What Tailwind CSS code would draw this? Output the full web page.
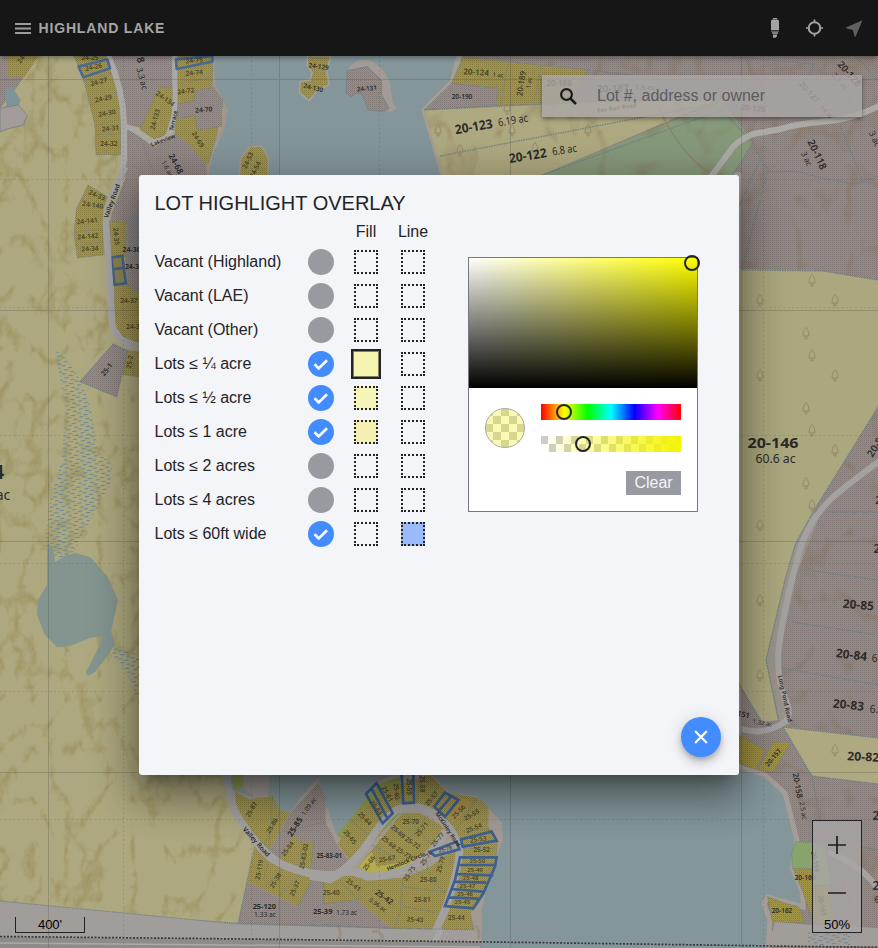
<!DOCTYPE html>
<html lang="en">
<head>
<meta charset="utf-8">
<title>Highland Lake</title>
<script src="https://cdn.jsdelivr.net/npm/@tailwindcss/browser@4"></script>
</head>
<body class="font-['Liberation_Sans',sans-serif]">
<div class="relative flex flex-col w-[878px] h-[948px] overflow-hidden text-[#222428]">

<!-- Map canvas -->
<svg class="absolute inset-0" width="878" height="948" viewBox="0 0 878 948" font-family="Noto Sans, sans-serif" font-weight="600" fill="#2c2b29" text-anchor="middle">
<defs>
<pattern id="m" width="2" height="2" patternUnits="userSpaceOnUse"><rect width="2" height="2" fill="#988d88"/><rect width="1" height="1" fill="#7f7572"/><rect x="1" y="1" width="1" height="1" fill="#8c817c"/></pattern>
<pattern id="m3" width="6" height="6" patternUnits="userSpaceOnUse"><rect width="6" height="6" fill="#9b908b"/><rect width="3" height="3" fill="#807673"/><rect x="3" y="3" width="3" height="3" fill="#8c817e"/></pattern>
<pattern id="g3" width="6" height="6" patternUnits="userSpaceOnUse"><rect width="6" height="6" fill="#a7994a"/><rect width="3" height="3" fill="#867b3c"/><rect x="3" y="3" width="3" height="3" fill="#978b42"/></pattern>
<pattern id="marsh" width="12" height="8" patternUnits="userSpaceOnUse" patternTransform="rotate(-4)"><path d="M0 1.5h4M6 3.5h4.500M2 5.500h4M8 7.500h4" stroke="#66889a" stroke-width="1"/></pattern>
<filter id="relief" x="0" y="0" width="100%" height="100%" color-interpolation-filters="sRGB"><feTurbulence type="turbulence" baseFrequency=".03 .02" numOctaves="4" seed="8"/><feColorMatrix values="0 0 0 0 .54  0 0 0 0 .46  0 0 0 0 .22  -4 0 0 0 1"/></filter>
<filter id="reliefR" x="0" y="0" width="100%" height="100%" color-interpolation-filters="sRGB"><feTurbulence type="turbulence" baseFrequency=".02 .015" numOctaves="3" seed="3"/><feColorMatrix values="0 0 0 0 .5  0 0 0 0 .4  0 0 0 0 .28  -4 0 0 0 .8"/></filter>
<clipPath id="cl"><path d="M0 130L22 124 28 114 20 90 38 56H76L95 125 97 154H121L108 198 88 185 74 230 77 258H105L113 344 80 381 116 396 139 380V775H224L234 812 255 848 237 923 0 901Z"/></clipPath>
<clipPath id="cr"><path d="M461 56L452 82 424 110 443 175H739V269L823 271 878 280V56ZM878 407L813 512 780 660 786 725 878 738ZM739 735L812 776 878 784V928L805 920 797 840 785 793 765 775 739 765Z"/></clipPath>
<g id="tree"><path d="M0 -5.500C-2.500 -3 -3 0 -3 3H3C3 0 2.500 -3 0 -5.500M-1 3V6H1V3" fill="none" stroke="#948c69" stroke-width="1"/></g>
</defs>
<rect width="878" height="948" fill="#84969a"/>

<!-- Western shore -->
<path d="M0 56H214L215 85 227 108 223 132 214 150 207 175V400H139V775H224L234 812 255 848 237 925 0 901Z" fill="#ada87f"/>
<path d="M212 56L214 86 226 110 222 130 213 145 206 176" fill="none" stroke="#a1968c" stroke-width="4"/>
<g clip-path="url(#cl)"><rect y="56" width="270" height="880" filter="url(#relief)" opacity=".42"/></g>
<path d="M56 350L68 360 80 380 90 405 95 435 100 455 113 463 110 485 90 520 75 550 60 562 45 545 50 500 62 460 65 410Z" fill="url(#marsh)"/>
<path d="M115 644L125 649 139 656V704L127 672 112 656Z" fill="url(#marsh)"/>
<path d="M47 543L53 547 55 562 65 556 75 553 90 557 108 577 118 600 111 632 115 644 108 655 95 672 88 676 86 672 100 645 101 636 90 638 70 646 57 647 45 635 37 615 38 600 47 585Z" fill="#84948f"/>

<!-- North-west lots -->
<g transform="scale(.33333)" stroke-width="3" stroke-linejoin="round">
<path d="M0 168H115L45 270 0 325Z" fill="url(#m3)"/><path d="M22 168H115L75 230H22Z" fill="url(#g3)"/>
<path d="M15 270L36 260 62 300 54 325 20 330Z" fill="#7f9496"/><path d="M0 325L54 315 82 345 70 375 30 385 0 395Z" fill="#a39c9b" stroke="#7e8484"/>
<path d="M222 168H320L362 300V464H288L285 375 250 235Z" fill="url(#g3)" stroke="#77827b" stroke-dasharray="4 3"/>
<path d="M250 245L350 215M272 315L358 275M282 378L362 358M290 404L362 402" stroke="#77827b" stroke-dasharray="4 3"/>
<path d="M330 168H519V262L478 262 424 384 378 372 355 260Z" fill="url(#m3)"/>
<path d="M478 262H520L515 340 495 405 465 418 420 388Z" fill="url(#g3)" stroke="#77827b" stroke-dasharray="4 3"/>
<path d="M528 168H638L636 262 665 300 655 385 625 492 605 482 565 430 525 405Z" fill="url(#g3)" stroke="#77827b" stroke-dasharray="4 3"/>
<path d="M533 312L580 303 588 272 640 262 668 300 664 380 593 390 585 345 533 357Z" fill="url(#m3)" stroke="#77827b" stroke-dasharray="4 3"/>
<path d="M380 385L465 440 525 405 565 430 605 482 620 492V530H365L382 480Z" fill="url(#m3)"/>
<path d="M425 420L465 530M530 252L632 232" fill="none" stroke="#77827b" stroke-dasharray="4 3"/>
<path d="M375 380Q400 382 450 424Q500 430 515 385Q530 320 524 240V168" fill="none" stroke="#aaa9a7" stroke-width="15"/>
<path d="M325 168Q370 270 372 375V460Q370 520 355 560" fill="none" stroke="#aaa9a7" stroke-width="18"/>
<path d="M236 200L322 178 330 205 250 232ZM528 178L637 168V185L530 207Z" fill="none" stroke="#4a6a94" stroke-width="8"/>
<path d="M718 530L722 475 750 440 785 438 806 475 803 530Z" fill="url(#g3)" stroke="#a1988a" stroke-width="5"/>
<g font-size="20" fill="#4a4629">
<text transform="translate(282 208) rotate(-12)">24-26</text><text transform="translate(298 252) rotate(-14)">24-27</text><text transform="translate(311 302) rotate(-12)">24-29</text><text transform="translate(322 346) rotate(-10)">24-30</text><text transform="translate(332 392) rotate(-6)">24-31</text><text x="327" y="437">24-32</text><text x="270" y="180">24-25</text>
<text transform="translate(583 188) rotate(-5)">24-75</text><text transform="translate(583 225) rotate(-5)">24-74</text><text transform="translate(558 280) rotate(-8)">24-72</text><text transform="translate(612 336) rotate(-5)" fill="#2c2b29">24-70</text><text transform="translate(588 422) rotate(58)">24-69</text><text transform="translate(472 360) rotate(-75)">24-133</text><text transform="translate(492 302) rotate(35)">24-134</text>
<text transform="translate(750 484) rotate(-65)">24-53</text><text transform="translate(772 512) rotate(-65)">24-54</text><text transform="translate(70 180) rotate(-55)">24-</text></g>
<text transform="translate(412 182) rotate(75)" font-size="30">8</text><text transform="translate(418 238) rotate(75)" font-size="25" font-weight="400">3.3 ac</text>
<text transform="translate(520 495) rotate(62)" font-size="25">24-68</text><text transform="translate(496 509) rotate(62)" font-size="19" font-weight="400">1.6 ac</text>
<text transform="translate(491 426) rotate(-22)" font-size="17">Lakeview</text><text transform="translate(526 363) rotate(-78)" font-size="17">Terrace</text>
</g>

<!-- Valley Road bend -->
<g transform="translate(0 170) scale(.33333)" stroke-width="3">
<path d="M435 0H385L335 130 330 155 380 155 375 260 382 345 435 395Z" fill="url(#m3)"/>
<path d="M375 140L420 120V300L390 250Z" fill="url(#marsh)" opacity=".9"/>
<path d="M264 45L325 82 310 150 316 254 232 264 222 190 230 115Z" fill="url(#g3)" stroke="#77827b" stroke-dasharray="4 3"/>
<path d="M243 87L317 116M222 187L310 176M226 226L314 214" stroke="#77827b" stroke-dasharray="4 3"/>
<path d="M328 155H380L375 260 335 262ZM343 345L380 342 435 390V525L370 500 345 465Z" fill="url(#g3)" stroke="#77827b" stroke-dasharray="4 3"/>
<path d="M343 430L435 440" stroke="#77827b" stroke-dasharray="4 3"/>
<path d="M334 262L367 258 378 340 344 344ZM338 298L374 293" fill="#8c8551" stroke="#48658c" stroke-width="8"/>
<path d="M340 522L383 542 350 680 240 635Z" fill="url(#m3)" stroke="#6e8088" stroke-width="4" stroke-dasharray="4 3"/>
<path d="M383 542L435 548V622L368 614ZM405 545L400 618" fill="url(#g3)" stroke="#77827b" stroke-dasharray="4 3"/>
<path d="M375 -10L330 90Q317 120 318 165L335 440Q335 520 420 528" fill="none" stroke="#a6a5a3" stroke-width="20"/>
<g font-size="20" fill="#4a4629"><text transform="translate(288 82) rotate(22)">24-33</text><text transform="translate(277 112) rotate(8)">24-140</text><text transform="translate(262 160) rotate(-5)">24-141</text><text transform="translate(264 206) rotate(-5)">24-142</text><text transform="translate(270 243) rotate(-3)">24-34</text><text transform="translate(342 200) rotate(85)">24-35</text><text x="387" y="398">24-37</text><text x="405" y="478">24-39</text><text transform="translate(396 577) rotate(-80)">25-2</text></g>
<text x="398" y="245" font-size="21">24-36-</text><text x="402" y="297" font-size="21">24-36</text><text transform="translate(326 603) rotate(-52)" font-size="21">25-1</text>
<text transform="translate(342 95) rotate(-70)" font-size="19">Valley Road</text>
<text x="-5" y="927" font-size="60" font-weight="700">4</text><text x="9" y="990" font-size="42" font-weight="400">ac</text>
</g>

<!-- Islands -->
<g transform="translate(230 40) scale(.33333)" stroke-width="3">
<path d="M232 48H302L290 95 298 135 265 148 237 182 208 158 210 125 240 120 246 98 232 75Z" fill="url(#g3)" stroke="#a5a09c" stroke-width="5"/>
<path d="M352 92Q370 55 415 60Q465 80 480 130L488 185 500 205 485 215 450 210Z" fill="#a39b96"/>
<path d="M352 92L412 80 455 122V165L477 205 462 214 415 210 395 160 375 160 365 170 348 160Z" fill="url(#m3)" stroke="#77828a"/>
<text transform="translate(265 86) rotate(8)" font-size="19">24-129</text><text transform="translate(248 150) rotate(14)" font-size="19">24-130</text><text transform="translate(411 152) rotate(-5)" font-size="19">24-131</text>
</g>

<!-- Eastern shore -->
<path d="M461 50L452 82 424 110 443 175H739V766L765 775 785 793 797 840 792 868 803 893 803 907 768 897 764 904 770 920 768 952H890V50Z" fill="url(#m)" stroke="#a59d97" stroke-width="5"/>
<path d="M424 110L565 103 717 100 542 175H443Z" fill="#aea980"/>
<path d="M542 175L722 100 753 143 732 176Z" fill="#87997b"/>
<path d="M739 269L823 271 878 280V407L813 512 795 545 785 580 766 660 778 720 762 722 739 684Z" fill="#aba77e"/>
<path d="M783 727L878 738V784L812 776Z" fill="#aea980"/>
<path d="M813 512L797 540 785 580 766 660 780 723 790 725 788 700 778 665 796 575 820 515Z" fill="#9a938b"/>
<g clip-path="url(#cr)"><rect x="420" y="56" width="458" height="880" filter="url(#reliefR)" opacity=".35"/></g>
<g fill="none" stroke="#6e8088" stroke-width="1.300" stroke-dasharray="1.500 1"><path d="M440 156L717 103M424 110L565 103M542 175L722 110M722 110L753 143 732 176M742 270L823 271 878 280M878 407L813 512 795 545 785 580 766 660 778 718M739 684L762 722M587 70L820 97M830 512H878M800 569L878 580M792 622L878 635M783 668L878 685M783 727L878 738M812 776L878 784M783 727L812 776 832 885 838 925M854 846L878 850M752 143L768 170 760 200 742 269M768 172L795 171 830 180 855 184 878 176M840 125L863 182M725 56L814 64 805 85 790 110M814 64L853 105M855 56L878 80M739 206L760 160"/><path d="M658 106Q680 155 712 174" stroke="#8d765b"/></g>
<g transform="translate(230 40) scale(.33333)" stroke-width="3" stroke="#77827b" stroke-dasharray="4 3">
<path d="M700 50L835 65 1071 90 1020 190 798 196 805 145 665 130Z" fill="url(#g3)"/><path d="M665 130L805 145 798 196 585 208Z" fill="url(#m3)"/><path d="M835 65L812 195M935 75L912 190" fill="none"/></g>
<g><use href="#tree" x="438" y="130"/><use href="#tree" x="460" y="150"/><use href="#tree" x="512" y="130"/><use href="#tree" x="507" y="108"/><use href="#tree" x="535" y="148"/><use href="#tree" x="588" y="130"/>
<use href="#tree" x="812" y="280"/><use href="#tree" x="760" y="300"/><use href="#tree" x="835" y="300"/><use href="#tree" x="806" y="333"/><use href="#tree" x="812" y="355"/><use href="#tree" x="760" y="375"/><use href="#tree" x="835" y="375"/><use href="#tree" x="806" y="408"/><use href="#tree" x="812" y="430"/><use href="#tree" x="835" y="450"/><use href="#tree" x="806" y="483"/><use href="#tree" x="812" y="505"/><use href="#tree" x="760" y="525"/><use href="#tree" x="760" y="600"/><use href="#tree" x="760" y="675"/><use href="#tree" x="835" y="750"/></g>
<path d="M884 103Q860 117 830 121Q795 124 781 129L753 134Q735 141 728 154L710 178" fill="none" stroke="#abaaa6" stroke-width="6"/>
<path d="M884 458Q845 486 830 500Q805 525 797 560Q781 620 778 655Q778 685 786 700Q792 715 785 722Q762 737 739 728M828 852Q862 865 878 889" fill="none" stroke="#a3a2a0" stroke-width="6"/>
<g transform="translate(735 560) scale(.33333)" stroke="#77827b" stroke-width="3" stroke-dasharray="4 3">
<path d="M12 525L90 570 65 628 35 620 12 610ZM115 545L168 548 115 635 68 630ZM175 926H275L300 1090 235 1090 205 1000ZM98 1010L150 1030 190 1040 210 1088 112 1086Z" fill="url(#g3)"/>
<path d="M182 845L270 850 290 975 232 978 235 926H172L170 880Z" fill="#88a36c"/></g>
<g>
<text transform="translate(474.500 131) rotate(-10)" font-size="12.700" font-weight="700" textLength="38" lengthAdjust="spacingAndGlyphs">20-123</text><text transform="translate(513.500 124) rotate(-10)" font-size="11" font-weight="400" textLength="30" lengthAdjust="spacingAndGlyphs">6.19 ac</text>
<text transform="translate(528.500 160) rotate(-9)" font-size="12.700" font-weight="700" textLength="38" lengthAdjust="spacingAndGlyphs">20-122</text><text transform="translate(565 153.500) rotate(-9)" font-size="11" font-weight="400" textLength="25" lengthAdjust="spacingAndGlyphs">6.8 ac</text>
<text transform="translate(476 75) rotate(3)" font-size="8" fill="#454127">20-124</text><text transform="translate(498 77) rotate(3)" font-size="6" font-weight="400">1 ac</text>
<text x="462" y="99" font-size="6.500">20-190</text><text transform="translate(524 84) rotate(-82)" font-size="8" fill="#454127">20-189</text><text transform="translate(531 83) rotate(-82)" font-size="6" font-weight="400">1 ac</text>
<text x="559" y="86" font-size="8">20-188</text><text transform="translate(613 92) rotate(-2)" font-size="10">20-187</text><text x="645" y="90" font-size="7.500" font-weight="400">1.8 ac</text><text transform="translate(617 110) rotate(-8)" font-size="6">Fox Run Road</text>
<text transform="translate(753 111) rotate(5)" font-size="8">20-126</text>
<text transform="translate(807 94) rotate(48)" font-size="8">20-127</text><text transform="translate(825 113) rotate(48)" font-size="5.500">1.6 ac</text>
<text transform="translate(847 76) rotate(48)" font-size="9.500">20-128</text><text transform="translate(838 83) rotate(48)" font-size="7.500" font-weight="400">2.1 ac</text>
<text transform="translate(814 156) rotate(65)" font-size="10">20-118</text><text transform="translate(804 160) rotate(65)" font-size="8" font-weight="400">3 ac</text><text transform="translate(872 140) rotate(65)" font-size="8.500" font-weight="400">3 ac</text>
<text x="773" y="448" font-size="14.500" font-weight="700" textLength="51" lengthAdjust="spacingAndGlyphs">20-146</text><text x="775.500" y="463" font-size="12.200" font-weight="400">60.6 ac</text>
<text transform="translate(878 449) rotate(-58)" font-size="10">20-8</text><text x="878" y="504" font-size="10">2</text><text x="877" y="553" font-size="12">2</text>
<text transform="translate(858 609) rotate(5)" font-size="12" font-weight="700" textLength="31" lengthAdjust="spacingAndGlyphs">20-85</text><text transform="translate(851 659) rotate(7)" font-size="12" font-weight="700" textLength="31" lengthAdjust="spacingAndGlyphs">20-84</text><text x="876" y="662" font-size="10" font-weight="400">6.</text><text transform="translate(848 709) rotate(6)" font-size="12" font-weight="700" textLength="31" lengthAdjust="spacingAndGlyphs">20-83</text><text x="874" y="713" font-size="10" font-weight="400">6.</text><text transform="translate(863 761) rotate(3)" font-size="12" font-weight="700" textLength="32" lengthAdjust="spacingAndGlyphs">20-82</text>
<text transform="translate(795 786) rotate(80)" font-size="8">20-158</text><text transform="translate(801 811) rotate(80)" font-size="6.500" font-weight="400">2.5 ac</text><text transform="translate(775 759) rotate(-50)" font-size="6.500">20-157</text><text x="782" y="913" font-size="6.500">20-162</text><text x="805" y="880" font-size="6.500">20-160</text>
<text transform="translate(813 862) rotate(80)" font-size="6.500">20-159</text><text transform="translate(820 906) rotate(80)" font-size="6.500">20-161</text>
<text transform="translate(743 717) rotate(12)" font-size="7.500">151</text><text transform="translate(762 725) rotate(10)" font-size="6" font-weight="400">1.32 ac</text><text transform="translate(783 699) rotate(78)" font-size="6">Long Pond Road</text>
<text x="876" y="820" font-size="12">2</text><text x="876" y="890" font-size="12">2</text><text x="877" y="903" font-size="9" font-weight="400">6</text></g>

<!-- Southern peninsula -->
<g transform="translate(200 770) scale(.33333)" stroke-width="3">
<path d="M75 15L100 60 160 85 205 80 240 128 270 128 300 85 355 22 375 95 410 195 450 145 500 85 530 35 590 10H690L750 70 830 78 905 155 908 210 870 310 845 420V520L460 520 400 465 115 460 163 230 85 60Z" fill="#a39b93"/>
<path d="M130 15H210L205 80 160 80 130 55Z" fill="#a09894"/>
<path d="M95 15H130L128 50 105 62ZM410 195L500 85 540 40 600 22V130L480 260Z" fill="#8e984f"/>
<path d="M105 65L150 88 218 78 240 120 270 128 205 250 165 220 112 145Z" fill="url(#g3)"/>
<path d="M355 40L378 80 376 155 412 225 450 275 400 310 330 305 240 270 205 250 270 130Z" fill="url(#m3)"/>
<path d="M280 195L305 215 342 213 335 300 240 270Z" fill="url(#g3)"/>
<path d="M165 230L205 275 300 315 340 325 293 410 140 335Z" fill="url(#g3)"/>
<path d="M140 335L293 410 340 325 410 335 470 390 580 478 115 460Z" fill="url(#m3)"/>
<path d="M370 335L440 310 480 325 610 325 690 290 760 240 780 255 720 480 580 478 470 390 372 402Z" fill="url(#g3)"/>
<path d="M413 222L455 150 540 80 575 50 690 15 745 70 830 82 865 110V170L895 215 885 290 850 370 820 420 810 430 823 482H718L780 240 740 170 690 110 600 105 450 272Z" fill="url(#g3)"/>
<path d="M605 130H660L720 165 740 190 650 275 560 300 500 305 475 290Z" fill="url(#g3)"/>
<path d="M475 290L515 245 530 290 640 270 700 235 745 175 725 220 600 305 510 312Z" fill="#b2ac4e"/>
<path d="M740 140L790 88 815 95 760 160Z" fill="#a88e49"/>
<path d="M180 255L240 125M205 275L190 330M255 290L195 350M300 315L235 380M218 80L205 250M378 155L230 190M305 215L300 300M342 213L330 305M340 325L293 410M372 402L370 335M420 335L475 390 480 330M372 402L470 390M610 325L600 430 580 478M610 350L735 365M610 410L725 430M570 165L630 205 690 130M515 225L590 265M620 135L690 220M560 60L610 105M660 15L650 100M715 45L670 115M450 150L510 200M790 185L865 175M790 235L890 235M770 180L830 85M163 230L115 460 0 452M400 465L580 478 720 482H823L810 430M115 460L400 465M630 290L735 365M680 280L690 320" fill="none" stroke="#77827b" stroke-dasharray="4 3" stroke-width="3.500"/>
<path d="M80 15Q85 100 120 150Q190 260 260 290Q340 320 410 313Q450 290 500 225Q560 130 600 115Q650 100 700 130Q765 175 778 240Q775 310 735 420L695 510M420 308Q470 300 500 320Q600 320 650 280Q720 230 735 180M330 318L390 328 440 300" fill="none" stroke="#a3a19f" stroke-width="23" stroke-linejoin="round"/>
<g fill="none" stroke="#3d6091" stroke-width="8"><path d="M498 72L530 40 578 130 548 160ZM515 57L562 145M605 15L610 100 642 98 640 15M703 110L735 68 775 90 735 140ZM755 78L715 125M783 208L875 185 890 212 788 230ZM690 245L770 215 778 238 705 258ZM780 262H890L885 290 850 370 820 415 735 408 765 330ZM776 285H886M770 312L880 316M763 335L858 338M752 357L850 365M745 382L835 386"/></g>
<g font-size="19" fill="#4a4629"><text transform="translate(160 122) rotate(-60)">25-87</text><text transform="translate(222 170) rotate(-60)">25-86</text><text transform="translate(268 240) rotate(-55)">25-84</text><text transform="translate(318 260) rotate(-80)">25-83-02</text><text transform="translate(184 300) rotate(-80)">25-119</text><text transform="translate(232 335) rotate(-60)">25-38</text><text transform="translate(290 358) rotate(-65)">25-37</text><text x="394" y="374">25-40</text><text transform="translate(456 350) rotate(38)">25-41</text><text x="645" y="455" transform="rotate(3 645 455)">25-43</text><text x="667" y="395">25-81</text><text x="685" y="337">25-80</text><text x="769" y="450">25-44</text><text x="845" y="247">25-52</text><text transform="translate(835 215) rotate(-8)">25-53</text><text transform="translate(824 180) rotate(-22)">25-54</text><text transform="translate(818 140) rotate(-30)">25-55</text><text transform="translate(780 130) rotate(-45)">25-56</text><text transform="translate(700 90) rotate(-50)">25-57</text><text transform="translate(660 42) rotate(90)">25-58</text><text transform="translate(620 50) rotate(90)">25-59</text><text transform="translate(583 65) rotate(85)">25-60</text><text transform="translate(556 75) rotate(60)">25-61</text><text transform="translate(523 117) rotate(55)">25-63</text><text transform="translate(490 150) rotate(45)">25-64</text><text transform="translate(445 205) rotate(50)">25-65</text><text x="632" y="162">25-70</text><text transform="translate(670 182) rotate(-50)">25-71</text><text transform="translate(590 190) rotate(42)">25-69</text><text transform="translate(562 222) rotate(40)">25-68</text><text transform="translate(562 273) rotate(-8)">25-67</text><text transform="translate(512 283) rotate(-55)">25-66</text><text transform="translate(634 224) rotate(35)">25-72</text><text transform="translate(607 254) rotate(35)">25-73</text><text transform="translate(633 314) rotate(-55)">25-75</text><text transform="translate(684 268) rotate(-55)">25-76</text><text transform="translate(718 213) rotate(-50)">25-77</text><text transform="translate(737 243) rotate(-15)" font-size="16">25-78</text><text transform="translate(728 285) rotate(-75)">25-79</text><g font-size="18"><text x="832" y="279">25-50</text><text x="825" y="305">25-49</text><text x="812" y="330">25-48</text><text x="802" y="353">25-47</text><text x="795" y="378">25-46</text><text x="787" y="402">25-45</text></g></g>
<text transform="translate(292 175) rotate(-58)" font-size="24" font-weight="700">25-85</text><text transform="translate(332 113) rotate(-55)" font-size="19" font-weight="400">1.09 ac</text><text x="388" y="264" font-size="19" font-weight="700">25-83-01</text><text x="193" y="416" font-size="22" font-weight="700">25-120</text><text x="195" y="440" font-size="20" font-weight="400">1.33 ac</text><text x="368" y="432" font-size="22.500" font-weight="700">25-39</text><text x="440" y="434" font-size="19" font-weight="400">1.73 ac</text><text transform="translate(548 388) rotate(35)" font-size="23">25-42</text><text transform="translate(530 410) rotate(35)" font-size="18" font-weight="400">0.96 ac</text>
<text transform="translate(164 220) rotate(48)" font-size="20">Valley Road</text><text transform="translate(739 181) rotate(56)" font-size="17">McKinley Road</text><text transform="translate(620 280) rotate(-22)" font-size="17">Hemlock Circle</text>
</g>

<!-- Town boundary and map grid -->
<path d="M0 901L237 924 393 929 474 930 482 941V948H0Z" fill="#a19d9a"/>
<path d="M430 948L437 929H444L436 948Z" fill="#a8a6a4"/>
<path d="M0 937L482 942V948H0Z" fill="#8d8c8b"/><path d="M0 943L480 947" stroke="#aaa" stroke-width="1.500"/>
<path d="M338 926q4 6 1 13M372 932q8 -3 11 6M476 925q5 8 2 14" fill="none" stroke="#8e7c62" stroke-width="3" opacity=".4"/>
<path d="M812 925L878 928V946H768L775 922Z" fill="#a19d99"/><path d="M808 932H850V945H808Z" fill="url(#marsh)"/>
<path d="M0 901L237 924 474 930" fill="none" stroke="#6e8088" stroke-dasharray="1.500 1"/>
<path d="M0 936.500L200 938.500 530 942.500 878 947.500" fill="none" stroke="#3a3a3a" stroke-width="1.700" stroke-dasharray="2 1.500"/>
<g stroke="#383838" opacity=".22"><path d="M48.500 56V948M279.500 56V948M510.500 56V948M741.500 56V948M0 79.500H878M0 310.500H878M0 541.500H878M0 772.500H878"/><path d="M123.500 56V948M251.500 56V948M379.500 56V948M763.500 56V948M0 179.500H878M0 307.500H878M0 435.500H878M0 563.500H878M0 691.500H878M0 819.500H878" stroke-dasharray="2 2.500" opacity=".7"/></g>
</svg>

<!-- Toolbar -->
<header class="relative flex h-14 shrink-0 items-center bg-[#161616] pl-[15px] pr-[15px] shadow-[0_2px_5px_rgba(0,0,0,.35)]">
<svg width="16" height="11" viewBox="0 0 16 11" fill="#9c9d9c"><path d="M0 0h16v2H0zM0 4.500h16v2H0zM0 9h16v2H0z"/></svg>
<h1 class="ml-[7.500px] grow text-[14px] font-bold tracking-[.84px] text-[#a5a5a5]">HIGHLAND LAKE</h1>
<svg width="10" height="22" viewBox="0 0 10 22" class="mr-[26px]" fill="#a3a3a5"><path d="M3 1h4v1H3zM2 2.500h6l1 1.500v9H1V4zM1 13.700h8v.9H1zM2 15.200h6v1.600H2zM3 17.500h4v1.800l-1.500 1.500H3z"/></svg>
<svg width="17" height="18" viewBox="0 0 17 18" class="mr-[23px]" fill="none" stroke="#a3a3a5" stroke-width="2"><circle cx="8.500" cy="9" r="5.800"/><path d="M8.500 .5v3.500M8.500 14v3.500M0 9h3.500M13.500 9h3.500" stroke-width="1.700"/></svg>
<svg width="17" height="17" viewBox="0 0 17 17" fill="#606063"><path d="M16.500 .3L0 7.500v.8l6.800 1.800 1.900 6.600h.8z"/></svg>
</header>

<!-- Search -->
<div class="relative ml-[542px] mt-[19px] flex h-[42px] w-[320px] shrink-0 items-center bg-[#aba7a8]/80 pl-[17px] shadow-[0_2px_4px_rgba(0,0,0,.4)]">
<svg width="19" height="19" viewBox="0 0 19 19" fill="none" stroke="#1b1b1b"><circle cx="7.500" cy="7.500" r="5.400" stroke-width="2.200"/><path d="M11.300 11.300L17 17" stroke-width="2.500"/></svg>
<span class="ml-[19px] text-[16px] text-[#5c5b5c]">Lot #, address or owner</span>
</div>

<!-- Scale bar -->
<div class="absolute left-[15px] top-[917px] flex h-4 w-[70px] items-center justify-center border border-t-0 border-[#222] text-[13px] leading-none text-black">400'</div>

<!-- Zoom control -->
<div class="absolute left-[812px] top-[820px] flex h-[113px] w-[50px] flex-col items-center border border-[#222] bg-[#aaa6a6]/80 text-black">
<svg width="18" height="66" viewBox="0 0 18 66" class="mt-[15px]" stroke="#1e1e1e" stroke-width="1.700"><path d="M0 9h18M9 0v18M0 57h18"/></svg>
<span class="mt-[15px] text-[13px] leading-[15px]">50%</span>
</div>

<!-- Dialog -->
<section class="absolute left-[139px] top-[175px] flex h-[600px] w-[600px] items-start rounded-[3px] bg-[#f4f5f9] pl-[15.500px] shadow-[0_11px_15px_-7px_rgba(0,0,0,.3),0_24px_38px_3px_rgba(0,0,0,.24),0_9px_46px_8px_rgba(0,0,0,.22)]">
<div class="flex w-[313.500px] shrink-0 flex-col pt-4">
<h2 class="text-[20px] leading-6">LOT HIGHLIGHT OVERLAY</h2>
<div class="flex h-[30px] items-center pt-[3px] text-[16px]"><span class="ml-[187.500px] w-12 text-center">Fill</span><span class="w-[46px] text-center">Line</span></div>
<div class="flex flex-col text-[16px]">
<div class="flex h-[34px] items-center"><span class="w-[153.500px]">Vacant (Highland)</span><i class="size-[26px] rounded-full bg-[#989aa2]"></i><i class="ml-5 size-6 border-2 border-dotted border-[#222428]"></i><i class="ml-[23px] size-6 border-2 border-dotted border-[#222428]"></i></div>
<div class="flex h-[34px] items-center"><span class="w-[153.500px]">Vacant (LAE)</span><i class="size-[26px] rounded-full bg-[#989aa2]"></i><i class="ml-5 size-6 border-2 border-dotted border-[#222428]"></i><i class="ml-[23px] size-6 border-2 border-dotted border-[#222428]"></i></div>
<div class="flex h-[34px] items-center"><span class="w-[153.500px]">Vacant (Other)</span><i class="size-[26px] rounded-full bg-[#989aa2]"></i><i class="ml-5 size-6 border-2 border-dotted border-[#222428]"></i><i class="ml-[23px] size-6 border-2 border-dotted border-[#222428]"></i></div>
<div class="flex h-[34px] items-center"><span class="w-[153.500px]">Lots ≤ ¼ acre</span><i class="flex size-[26px] items-center justify-center rounded-full bg-[#428cff]"><svg width="16" height="13" viewBox="0 0 16 13" fill="none" stroke="#fff" stroke-width="2.700"><path d="M1.500 6.200L5.700 10.400 14 2.200"/></svg></i><i class="ml-[17px] size-[30px] border-2 border-[#222428] bg-[#f5f4b0] shadow-[inset_0_0_0_1px_#817f61]"></i><i class="ml-5 size-6 border-2 border-dotted border-[#222428]"></i></div>
<div class="flex h-[34px] items-center"><span class="w-[153.500px]">Lots ≤ ½ acre</span><i class="flex size-[26px] items-center justify-center rounded-full bg-[#428cff]"><svg width="16" height="13" viewBox="0 0 16 13" fill="none" stroke="#fff" stroke-width="2.700"><path d="M1.500 6.200L5.700 10.400 14 2.200"/></svg></i><i class="ml-5 size-6 border-2 border-dotted border-[#222428] bg-[#f5f4b9]"></i><i class="ml-[23px] size-6 border-2 border-dotted border-[#222428]"></i></div>
<div class="flex h-[34px] items-center"><span class="w-[153.500px]">Lots ≤ 1 acre</span><i class="flex size-[26px] items-center justify-center rounded-full bg-[#428cff]"><svg width="16" height="13" viewBox="0 0 16 13" fill="none" stroke="#fff" stroke-width="2.700"><path d="M1.500 6.200L5.700 10.400 14 2.200"/></svg></i><i class="ml-5 size-6 border-2 border-dotted border-[#222428] bg-[#f5efb3]"></i><i class="ml-[23px] size-6 border-2 border-dotted border-[#222428]"></i></div>
<div class="flex h-[34px] items-center"><span class="w-[153.500px]">Lots ≤ 2 acres</span><i class="size-[26px] rounded-full bg-[#989aa2]"></i><i class="ml-5 size-6 border-2 border-dotted border-[#222428]"></i><i class="ml-[23px] size-6 border-2 border-dotted border-[#222428]"></i></div>
<div class="flex h-[34px] items-center"><span class="w-[153.500px]">Lots ≤ 4 acres</span><i class="size-[26px] rounded-full bg-[#989aa2]"></i><i class="ml-5 size-6 border-2 border-dotted border-[#222428]"></i><i class="ml-[23px] size-6 border-2 border-dotted border-[#222428]"></i></div>
<div class="flex h-[34px] items-center"><span class="w-[153.500px]">Lots ≤ 60ft wide</span><i class="flex size-[26px] items-center justify-center rounded-full bg-[#428cff]"><svg width="16" height="13" viewBox="0 0 16 13" fill="none" stroke="#fff" stroke-width="2.700"><path d="M1.500 6.200L5.700 10.400 14 2.200"/></svg></i><i class="ml-5 size-6 border-2 border-dotted border-[#222428]"></i><i class="ml-[23px] size-6 border-2 border-dotted border-[#222428] bg-[#9bbafa]"></i></div>
</div>
</div>
<!-- Colour picker -->
<div class="mt-[82px] h-[255px] w-[230px] border border-[#77787c] bg-white">
<div class="relative h-[130px] bg-[linear-gradient(to_top,#000,transparent),linear-gradient(to_right,#fff,#ff0)]"><i class="absolute left-[215px] top-[-3px] size-4 rounded-full border-2 border-[#222428]"></i></div>
<div class="flex pl-4 pr-4 pt-4">
<i class="mt-1 size-10 rounded-full border border-[#aaa] bg-[repeating-conic-gradient(#fbfab5_0_25%,#d8d78f_0_50%)] bg-size-[16px_16px] bg-position-[-1px_-1px]"></i>
<div class="ml-4 flex w-[140px] flex-col">
<div class="relative h-4 bg-[linear-gradient(to_right,#f00,#ff0,#0f0,#0ff,#00f,#f0f,#f00)]"><i class="absolute left-[15px] top-0 size-4 rounded-full border-2 border-[#222428]"></i></div>
<div class="relative mt-4 h-4 bg-[linear-gradient(to_right,transparent,#f5f500),repeating-conic-gradient(#fff_0_25%,#ccc_0_50%)] bg-size-[100%_100%,15px_16px]"><i class="absolute left-[34px] top-0 size-4 rounded-full border-2 border-[#222428]"></i></div>
<button class="mt-[19px] h-6 w-[55px] self-end bg-[#989aa2] text-[16px] leading-6 text-[#f4f5f8]">Clear</button>
</div>
</div>
</div>
<button class="absolute left-[542px] top-[542px] flex size-10 items-center justify-center rounded-full bg-[#428cff] shadow-[0_3px_5px_-1px_rgba(0,0,0,.2),0_6px_10px_rgba(0,0,0,.14),0_1px_18px_rgba(0,0,0,.12)]"><svg width="14" height="14" viewBox="0 0 14 14" stroke="#fff" stroke-width="2.300" stroke-linecap="round"><path d="M1.800 1.800l10.400 10.400M12.200 1.800L1.800 12.200"/></svg></button>
</section>
</div>
</body>
</html>
